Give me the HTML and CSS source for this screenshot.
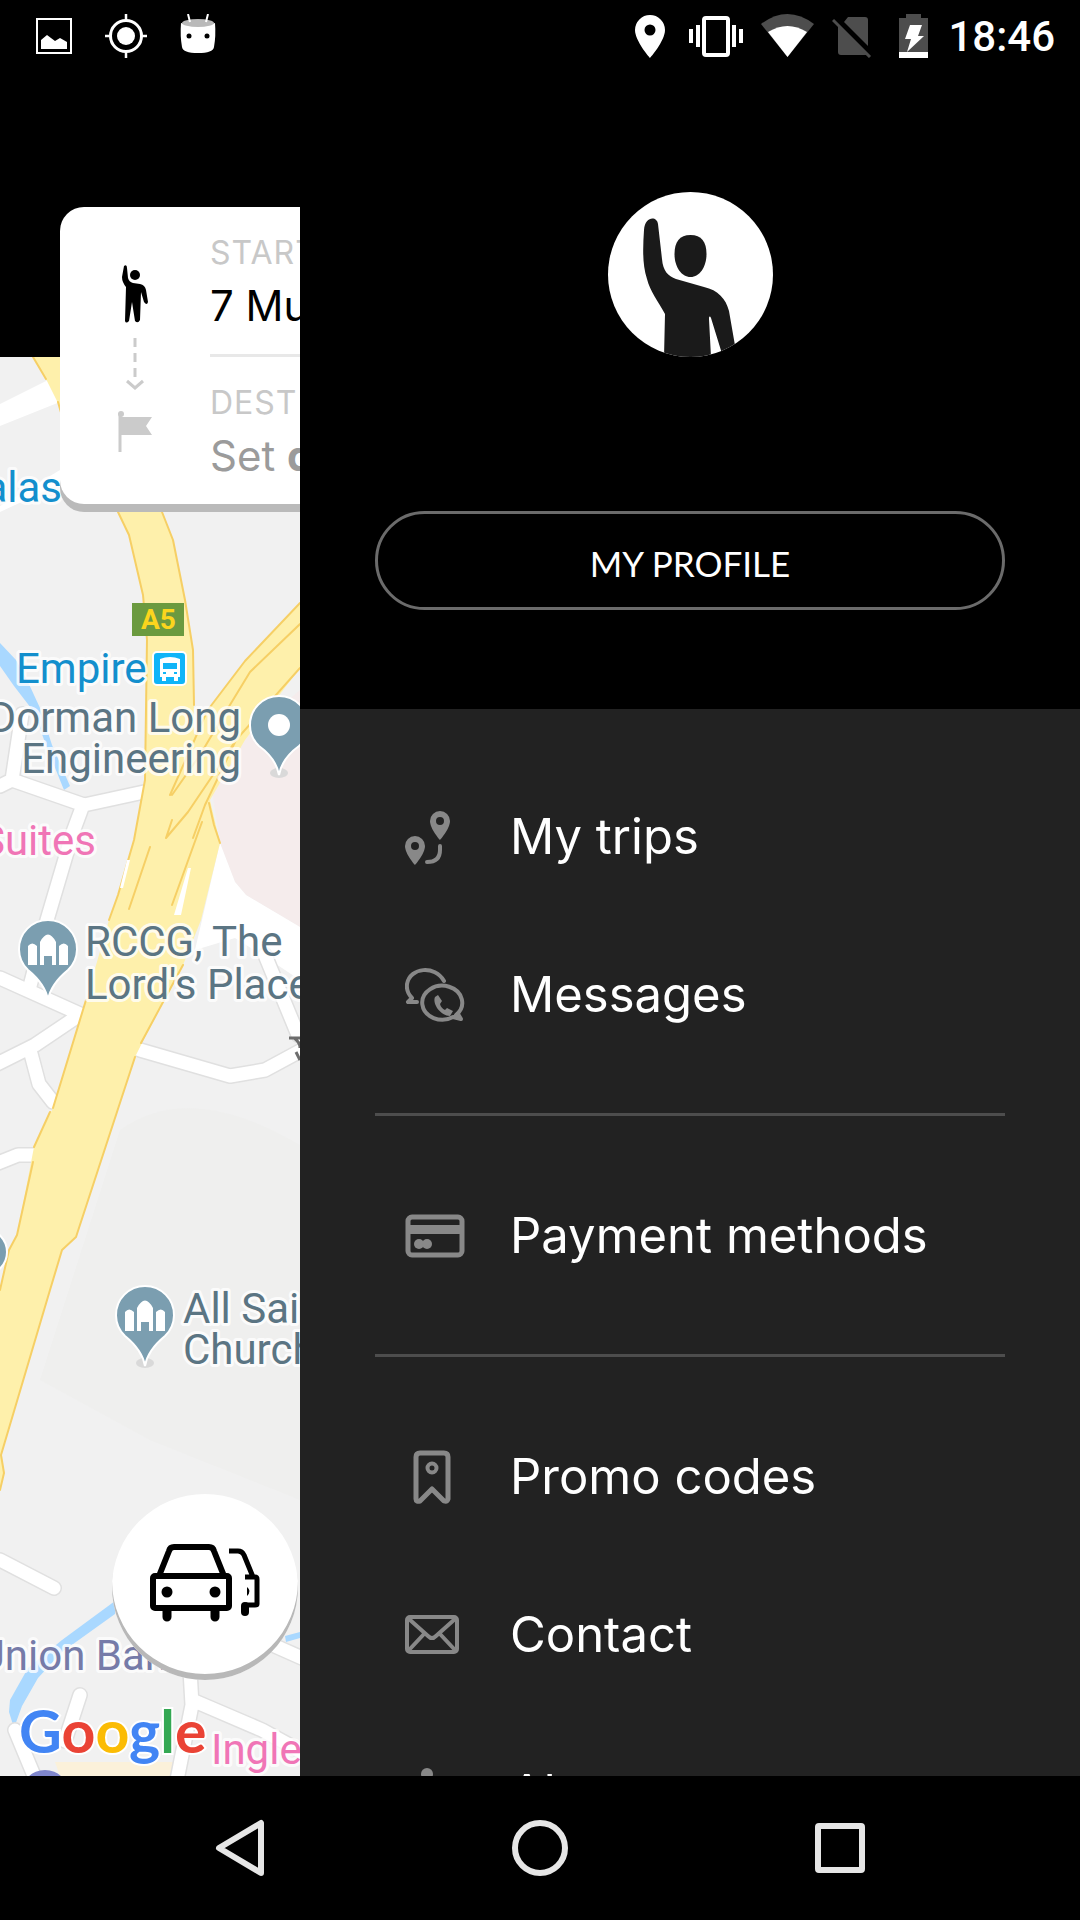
FILE: index.html
```html
<!DOCTYPE html>
<html lang="en">
<head>
    <meta charset="UTF-8">
    <meta name="viewport" content="width=device-width, initial-scale=1.0">
    <title>Menu</title>
    <link rel="stylesheet" href="styles.css">
</head>
<body>
    <header class="status-bar">
        <div class="status-left">
            <svg width="36" height="44" viewBox="0 0 36 44"><rect x="1" y="5" width="34" height="34" fill="none" stroke="#fff" stroke-width="2"/><path d="M5 35V26l6-5 8 6 5-3 7 4v7z" fill="#fff"/></svg>
            <svg width="42" height="44" viewBox="0 0 42 44"><circle cx="21" cy="22" r="15.500" fill="none" stroke="#fff" stroke-width="3"/><circle cx="21" cy="22" r="9" fill="#fff"/><path d="M21 0v7M21 37v7M0 22h7M35 22h7" stroke="#fff" stroke-width="2.500"/></svg>
            <svg width="36" height="44" viewBox="0 0 36 44"><path d="M1 9Q18 15 35 9Q36 22 34 33Q33 39 18 39Q3 39 2 33Q0 22 1 9z" fill="#fff"/><ellipse cx="18" cy="9" rx="16" ry="4" fill="#b9b9b9"/><path d="M8 0l2 8M28 0l-2 8" stroke="#fff" stroke-width="2"/><circle cx="9" cy="22" r="2.500"/><circle cx="27" cy="22" r="2.500"/></svg>
        </div>
        <div class="status-right">
            <svg width="42" height="44" viewBox="0 0 42 44"><path fill-rule="evenodd" d="M21 1a15 15 0 0 0-15 15c0 11 15 28 15 28s15-17 15-28a15 15 0 0 0-15-15zm0 9.500a5.500 5.500 0 1 1 0 11 5.500 5.500 0 0 1 0-11z" fill="#fff"/></svg>
            <svg width="54" height="44" viewBox="0 0 54 44"><rect x="15" y="4" width="24" height="37" rx="2" fill="none" stroke="#fff" stroke-width="4"/><path d="M2 15v14M9 11v22M45 11v22M52 15v14" stroke="#fff" stroke-width="4"/></svg>
            <svg width="53" height="44" viewBox="0 0 53 44"><path d="M0 10Q26.500-10 53 10L26.500 43z" fill="#4d4d4d"/><path d="M7 18Q26.500 6 46 18L26.500 43z" fill="#fff"/></svg>
            <svg width="40" height="44" viewBox="0 0 40 44"><path d="M12 8l4-5h17q3 0 3 3v26zM6 12l29 29H9q-3 0-3-3z" fill="#4d4d4d"/><path d="M1 6l37 37" stroke="#4d4d4d" stroke-width="3"/></svg>
            <svg width="40" height="44" viewBox="0 0 40 44"><path d="M9 4h7V0h15v4h7v34H9z" fill="#4d4d4d"/><path d="M9 38h29v6H9z" fill="#fff"/><path d="M20 11h12l-4 11h6L17 38l4-13h-6z" fill="#fff"/></svg>
            <span class="clock">18:46</span>
        </div>
    </header>

    <main class="stage">
        <section class="map-side">
            <svg class="map" viewBox="0 357 300 1419" preserveAspectRatio="xMinYMin slice">
                <rect y="357" width="300" height="1419" fill="#f1f1f1"/>
                <path d="M120 1130Q190 1080 300 1145V1500L150 1440 40 1380z" fill="#efefee"/>
                <path d="M55 1762h120v14H60z" fill="#fbf1da"/>
                <!-- water -->
                <path d="M0 643L16 660 28 682 40 708 52 745 70 786 64 790 47 748 34 712 14 686 0 666zM115 1601L62 1640 28 1668 10 1700 9 1712 14 1728 22 1706 38 1678 62 1652 115 1614zM285 1636l15-4v6l-14 4z" fill="#a9d8ff"/>
                <path d="M300 690l-56 48-32 52 8 53 15 39 11 13 54 32z" fill="#f5ecec"/>
                <path d="M220 843l15 39 11 13 54 32v53l-30-20-35-22-40 12z" fill="#fff"/>
                <!-- side streets, grey casing under white -->
                <g class="street-edge">
                    <path d="M0 786l12-6 72 25 60-13M12 780l10-66M83 805l-10 27-26 88-18 70M0 978l80 36M78 1016l-43 29-40 20M30 1050l9 34 14 18M-2 1163l20-8h16M140 1050l90 26 35-6 37-20M265 955l33 80"/>
                    <path d="M0 1560l54 28M80 1695l-15 46M190 1670l2 35-15 75M192 1700l70 30 40 22M275 1646l27 12M15 1730l20 48"/>
                </g>
                <g class="street">
                    <path d="M0 786l12-6 72 25 60-13M12 780l10-66M83 805l-10 27-26 88-18 70M0 978l80 36M78 1016l-43 29-40 20M30 1050l9 34 14 18M-2 1163l20-8h16M140 1050l90 26 35-6 37-20M265 955l33 80"/>
                    <path d="M0 1560l54 28M80 1695l-15 46M190 1670l2 35-15 75M192 1700l70 30 40 22M275 1646l27 12M15 1730l20 48"/>
                </g>
                <path d="M0 404l48-24 12 18v4L0 426z" fill="#fff"/>
                <path d="M0 506l60-36v14L0 512z" fill="#fff"/>
                <!-- highway -->
                <path d="M33 357L46 379 60 407 100 480 118 512 129 535 143 595 147 640 145 780 134 840 118 895 109 920 86 1000 53 1108 34 1147 17 1235 9 1250 0 1290V1490L4 1473 1 1455 50 1290 62 1250 76 1237 135 1057 142 1043 183 965 201 920 220 843 210 800 245 740 300 668V603L245 661 207 711 194 735 194 705 193 650 185 600 173 540 162 512 110 410 88 357z" fill="#fef0ab"/>
                <g class="road-line">
                    <path d="M33 357L46 379M58 402L62 416M118 512L129 535 143 595 147 640 145 780 134 840 118 895 109 920M86 1000L53 1108M50 1112L34 1147M33 1162L17 1235 9 1250 0 1290"/>
                    <path d="M162 512L173 540 185 600 193 650 194 705M300 603L245 661 207 711 194 741 170 795M300 624L250 672 222 718 200 755 172 795M300 668L236 740 215 772 188 812 166 838M236 740L205 805 193 838M209 803L214 825 220 843M202 822L172 905M172 820L166 838M150 847L129 909M183 965L141 1043M135 1057L76 1237 62 1250 50 1290 1 1455 4 1473 0 1490"/>
                </g>
                <path d="M188 868h3l-10 47h-7zM127 860h3l-7 28h-3z" fill="#fff"/>
                <path d="M289 1038h11M294 1038q6 4 6 10M296 1052l4 8" fill="none" stroke="#6d6d6d" stroke-width="3"/>

                <rect x="132" y="603" width="52" height="33" fill="#6b9a3f"/>
                <text class="shield" x="141" y="629">A5</text>
                <rect x="153" y="652" width="33" height="33" rx="4" fill="#10b5f8" stroke="#fff" stroke-width="2"/>
                <path fill-rule="evenodd" d="M160 659q10-4 20 0v18h-2v4h-4v-4h-8v4h-4v-4h-2zM163 663v6h14v-6zM163 672v2h3v-2zM174 672v2h3v-2z" fill="#fff"/>

                <g fill="#d9d9d9">
                    <ellipse cx="279" cy="773" rx="9" ry="5"/>
                    <ellipse cx="145" cy="1363" rx="9" ry="5"/>
                </g>
                <g class="pin">
                    <path transform="translate(279 725)" d="M0 50C-2 38-9 29-20 21A29 29 0 1 1 20 21C9 29 2 38 0 50z"/>
                    <path transform="translate(48 950)" d="M0 50C-2 38-9 29-20 20A29 29 0 1 1 20 20C9 29 2 38 0 50z"/>
                    <path transform="translate(145 1316)" d="M0 50C-2 38-9 29-20 20A29 29 0 1 1 20 20C9 29 2 38 0 50z"/>
                    <circle cx="-16" cy="1252" r="23"/>
                </g>
                <circle cx="279" cy="725" r="11" fill="#fff"/>
                <path transform="translate(48 950)" d="M-20 15V-4q4-5 9 0v19zM11 15V-4q5-5 9 0v19zM-8 15V-8Q0-23 8-8v23H4V6h-8v9z" fill="#fff"/>
                <path transform="translate(145 1316)" d="M-20 15V-4q4-5 9 0v19zM11 15V-4q5-5 9 0v19zM-8 15V-8Q0-23 8-8v23H4V6h-8v9z" fill="#fff"/>
                <circle cx="45" cy="1794" r="24" fill="#7f86cc"/>

                <g class="label">
                    <text class="transit" x="62" y="502" text-anchor="end">alas</text>
                    <text class="transit" x="16" y="683">Empire</text>
                    <text x="241" y="732" text-anchor="end">Dorman Long</text>
                    <text x="241" y="773" text-anchor="end">Engineering</text>
                    <text class="hotel" x="96" y="855" text-anchor="end">Suites</text>
                    <text x="85" y="956">RCCG, The</text>
                    <text x="85" y="999">Lord's Place</text>
                    <text x="183" y="1323">All Sai</text>
                    <text x="183" y="1364">Church</text>
                    <text class="bank" x="168" y="1670" text-anchor="end">Union Ban</text>
                    <text class="hotel" x="211" y="1764">Ingle</text>
                </g>
                <text class="google" x="19" y="1753"><tspan fill="#4285f4">G</tspan><tspan fill="#ea4335">o</tspan><tspan fill="#fbbc05">o</tspan><tspan fill="#4285f4">g</tspan><tspan fill="#34a853">l</tspan><tspan fill="#ea4335">e</tspan></text>
            </svg>

            <div class="route-card">
                <svg class="route-icons" width="150" height="297" viewBox="0 0 150 297">
                    <circle cx="75" cy="68" r="5"/>
                    <path d="M64 59q3-2 3 2l1 10q1 4 5 5l7 1q5 1 6 6l2 12q-1 4-4 0l-3-10-1 28q-2 4-5 1l-3-19-3 19q-3 3-4 0l1-34q-4-5-4-10z"/>
                    <path d="M75 131v40" fill="none" stroke="#cbcbcb" stroke-width="3" stroke-dasharray="9 6"/>
                    <path d="M67 174l8 7 8-7" fill="none" stroke="#cbcbcb" stroke-width="3"/>
                    <path d="M60 206v39" stroke="#cbcbcb" stroke-width="3"/>
                    <circle cx="61" cy="207" r="3" fill="#cbcbcb"/>
                    <path d="M61 210h31l-6 9 6 9H61z" fill="#cbcbcb"/>
                </svg>
                <div class="route-stops">
                    <div class="stop stop-start">
                        <div class="stop-label">START</div>
                        <div class="stop-value">7 Mu</div>
                    </div>
                    <div class="stop stop-dest">
                        <div class="stop-label">DEST</div>
                        <div class="stop-value">Set <b>d</b></div>
                    </div>
                </div>
            </div>

            <button class="cars-button" type="button" aria-label="Cars">
                <svg width="110" height="80" viewBox="0 0 110 80" fill="none" stroke="#000" stroke-width="6" stroke-linejoin="round">
                    <rect x="3" y="32" width="76" height="32" rx="2"/>
                    <path d="M9 32L19 7q1-4 5-4h35q4 0 5 4l10 25"/>
                    <circle cx="17" cy="48" r="5.500" fill="#000" stroke="none"/>
                    <circle cx="65" cy="48" r="5.500" fill="#000" stroke="none"/>
                    <path d="M17 66v7M65 66v7" stroke-width="9" stroke-linecap="round"/>
                    <path d="M79 7h9q4 0 6 4l9 22M95 33h10q2 0 2 2v25q0 1-2 1h-9" stroke-width="5"/>
                    <path d="M97 43q5 4 0 9z" fill="#000" stroke="none"/>
                    <path d="M95 62v6" stroke-width="8" stroke-linecap="round"/>
                </svg>
            </button>
        </section>

        <aside class="drawer">
            <div class="profile">
                <svg class="avatar" width="165" height="165" viewBox="0 0 165 165">
                    <clipPath id="round"><circle cx="82.500" cy="82.500" r="82.500"/></clipPath>
                    <circle cx="82.500" cy="82.500" r="82.500" fill="#fff"/>
                    <g clip-path="url(#round)" fill="#1a1a1a">
                        <path d="M82.500 43c11 0 16 7 16 19 0 13-7 23-16 23s-16-10-16-23c0-12 5-19 16-19z"/>
                        <path d="M36 38C37 24 49 24 50 32l4 35c1 12 6 17 14 20l28 8c14 3 22 12 25 24l8 46h-14l-12-39c-1-2-2-2-2 1l2 38H56l1-43C50 109 42 99 39 87 34 72 35 54 36 38z"/>
                    </g>
                </svg>
                <button class="profile-button" type="button">MY PROFILE</button>
            </div>
            <nav class="menu">
                <a class="menu-item" href="#">
                    <svg width="60" height="60" viewBox="0 0 60 60" fill="#888">
                        <path fill-rule="evenodd" d="M35 3a10 10 0 0 0-10 10c0 8 10 19 10 19s10-11 10-19A10 10 0 0 0 35 3zm0 6a4 4 0 1 1 0 8 4 4 0 0 1 0-8z"/>
                        <path fill-rule="evenodd" d="M10 28A10 10 0 0 0 0 38c0 8 10 19 10 19s10-11 10-19a10 10 0 0 0-10-10zm0 6a4 4 0 1 1 0 8 4 4 0 0 1 0-8z"/>
                        <path d="M35 38v4q0 12-13 12" fill="none" stroke="#888" stroke-width="4" stroke-linecap="round"/>
                    </svg>
                    My trips
                </a>
                <a class="menu-item" href="#">
                    <svg width="60" height="60" viewBox="0 0 60 60" fill="none" stroke="#888" stroke-width="4" stroke-linecap="round" stroke-linejoin="round">
                        <path d="M39 15C30-1 5 1 2 18q-1 8 5 14l-4 4 9 0"/>
                        <path d="M51 49A20 17 0 1 0 48 51l8 2-3-5"/>
                        <path d="M33 29l4 6-2 3q1 4 5 6l2-2 6 3-3 5C36 50 27 38 30 31z" fill="#888" stroke="none"/>
                    </svg>
                    Messages
                </a>
                <hr class="menu-line">
                <a class="menu-item" href="#">
                    <svg width="60" height="60" viewBox="0 0 60 60">
                        <rect x="3" y="10" width="54" height="38" rx="4" fill="none" stroke="#888" stroke-width="5"/>
                        <path d="M3 18h54v9H3z" fill="#888"/>
                        <circle cx="14" cy="37" r="5" fill="#888"/><circle cx="22" cy="37" r="5" fill="#888"/>
                    </svg>
                    Payment methods
                </a>
                <hr class="menu-line">
                <a class="menu-item" href="#">
                    <svg width="60" height="60" viewBox="0 0 60 60" fill="none" stroke="#888" stroke-width="5" stroke-linejoin="round">
                        <path d="M11 9q0-4 4-4h24q4 0 4 4v42q-1 3-4 2L27 41 15 53q-4 1-4-2z"/>
                        <circle cx="27" cy="20" r="4.500" stroke-width="4"/>
                    </svg>
                    Promo codes
                </a>
                <a class="menu-item" href="#">
                    <svg width="60" height="60" viewBox="0 0 60 60" fill="none" stroke="#888" stroke-width="4" stroke-linejoin="round">
                        <rect x="2" y="11" width="50" height="35" rx="3"/>
                        <path d="M4 13l19 17q4 4 8 0l19-17M4 44l15-16M50 44L35 28"/>
                    </svg>
                    Contact
                </a>
                <a class="menu-item" href="#">
                    <svg width="60" height="60" viewBox="0 0 60 60" fill="#888">
                        <circle cx="22" cy="10" r="6"/>
                        <path d="M14 22h12v26h5v5H14v-5h4V27h-4z"/>
                    </svg>
                    About
                </a>
            </nav>
        </aside>
    </main>

    <footer class="nav-bar">
        <button class="nav-button" type="button" aria-label="Back">
            <svg width="60" height="60" viewBox="0 0 60 60"><path d="M51 5v50L9 30z"/></svg>
        </button>
        <button class="nav-button" type="button" aria-label="Home">
            <svg width="60" height="60" viewBox="0 0 60 60"><circle cx="30" cy="30" r="25"/></svg>
        </button>
        <button class="nav-button" type="button" aria-label="Recent apps">
            <svg width="60" height="60" viewBox="0 0 60 60"><rect x="8" y="8" width="44" height="44" rx="1"/></svg>
        </button>
    </footer>
</body>
</html>
```
FILE: styles.css
```css
* {
    box-sizing: border-box;
}
body {
    margin: 0;
    height: 100vh;
    display: flex;
    flex-direction: column;
    background-color: #000000;
    font-family: Inter, "Liberation Sans", sans-serif;
}
button {
    margin: 0;
    padding: 0;
    border: none;
    cursor: pointer;
}
svg {
    display: block;
    flex: none;
}

/* status bar */
.status-bar {
    flex: none;
    height: 72px;
    padding: 0 25px 0 36px;
    display: flex;
    justify-content: space-between;
    align-items: center;
}
.status-left, .status-right {
    display: flex;
    align-items: center;
}
.status-left {
    gap: 33px;
}
.status-right {
    gap: 18px;
}
.clock {
    color: #ffffff;
    font-family: Roboto, sans-serif;
    font-size: 42px;
    font-weight: 500;
}

.stage {
    flex: 1;
    min-height: 0;
    display: grid;
    grid-template-columns: 5fr 13fr;
    grid-template-rows: 100%;
}

/* map */
.map-side {
    position: relative;
    overflow: hidden;
    padding-top: 285px;
}
.map {
    width: 100%;
    height: 100%;
}
.street, .street-edge, .road-line {
    fill: none;
    stroke-linejoin: round;
    stroke-linecap: round;
}
.street {
    stroke: #ffffff;
    stroke-width: 13px;
}
.street-edge {
    stroke: #e0e0e0;
    stroke-width: 16px;
}
.road-line {
    stroke: #f6cf65;
    stroke-width: 2px;
}
.pin {
    fill: #7b9eb0;
    stroke: #ffffff;
    stroke-width: 2px;
}
.label {
    font-family: Roboto, sans-serif;
    font-size: 42px;
    fill: #5b7583;
    stroke: rgba(255, 255, 255, 0.8);
    stroke-width: 6px;
    stroke-linejoin: round;
    paint-order: stroke;
}
.transit {
    fill: #138fcd;
}
.hotel {
    fill: #f075b6;
}
.bank {
    fill: #767ba8;
}
.shield {
    font-family: Roboto, sans-serif;
    font-size: 28px;
    font-weight: 700;
    fill: #fbd51d;
}
.google {
    font-family: Lato, sans-serif;
    font-size: 59px;
    font-weight: 700;
    stroke: #ffffff;
    stroke-width: 4px;
    paint-order: stroke;
}

/* start and destination card, lies over the map */
.route-card {
    position: absolute;
    top: 135px;
    left: 60px;
    width: 960px;
    display: flex;
    background-color: #ffffff;
    border-radius: 24px;
    box-shadow: 0 8px 0 #bababa;
}
.route-stops {
    flex: 1;
}
.stop {
    padding: 26px 0 20px;
    display: grid;
    gap: 5px;
}
.stop-start {
    border-bottom: 3px solid #e8e8e8;
}
.stop-label {
    color: #c8c8c8;
    font-size: 32px;
    line-height: 40px;
    letter-spacing: 1px;
}
.stop-value {
    font-size: 42px;
    line-height: 56px;
}
.stop-dest .stop-value {
    color: #9b9b9b;
}
.cars-button {
    position: absolute;
    left: 112px;
    bottom: 96px;
    width: 186px;
    height: 186px;
    padding-bottom: 6px;
    display: flex;
    justify-content: center;
    align-items: center;
    background-color: #ffffff;
    border-radius: 50%;
    box-shadow: inset 0 -6px 0 #b8b8b8;
}

/* drawer */
.drawer {
    overflow: hidden;
    background-color: #222222;
}
.profile {
    padding: 120px 75px 99px;
    display: flex;
    flex-direction: column;
    align-items: center;
    gap: 154px;
    background-color: #000000;
}
.profile-button {
    width: 100%;
    height: 99px;
    padding-top: 4px;
    border: 3px solid #6b6b6b;
    border-radius: 50px;
    background-color: #000000;
    color: #ffffff;
    font-family: Lato, sans-serif;
    font-size: 35px;
}
.menu {
    padding: 50px 75px;
}
.menu-item {
    height: 158px;
    padding: 0 0 4px 30px;
    display: flex;
    align-items: center;
    gap: 45px;
    color: #ffffff;
    font-size: 49px;
    text-decoration: none;
}
.menu-item svg {
    margin-top: 4px;
}
.menu-line {
    height: 3px;
    margin: 38px 0 42px;
    border: none;
    background-color: #4d4d4d;
}

/* android buttons */
.nav-bar {
    flex: none;
    height: 144px;
    padding: 0 90px;
    display: flex;
}
.nav-button {
    flex: 1;
    display: flex;
    justify-content: center;
    align-items: center;
    background-color: #000000;
}
.nav-button svg {
    fill: none;
    stroke: #e6e6e6;
    stroke-width: 6px;
    stroke-linejoin: round;
}
```
